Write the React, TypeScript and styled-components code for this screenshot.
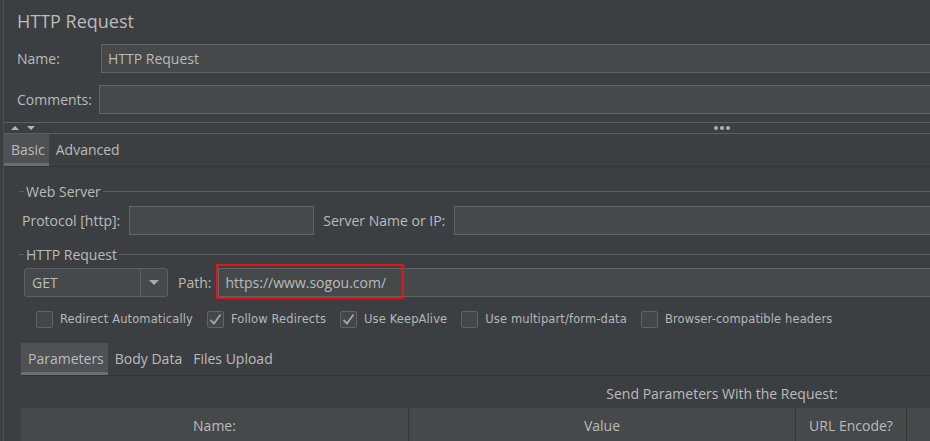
import React from 'react';
import styled, { createGlobalStyle } from 'styled-components';

const Global = createGlobalStyle`
  html, body { margin: 0; padding: 0; background: #3c3f41; overflow: hidden; }
  body { font-family: "Open Sans", "Liberation Sans", sans-serif; color: #bbbbbb; }
  * { box-sizing: border-box; }
`;

const Viewport = styled.div`
  width: 930px;
  height: 441px;
  overflow: hidden;
  background: #3c3f41;
`;

const Frame = styled.div`
  width: 1437px;
  min-height: 441px;
  margin-left: 3px;
  border-left: 1px solid #4e5153;
  display: flex;
  flex-direction: column;
`;

const Header = styled.div`
  display: flex;
  flex-direction: column;
  padding: 9px 0 0 13px;
`;

const Title = styled.div`
  font-size: 18px;
  line-height: 24px;
  height: 24px;
  color: #bbbbbb;
`;

const FieldRow = styled.div<{ $top: number }>`
  display: flex;
  align-items: center;
  height: 29px;
  margin-top: ${p => p.$top}px;
`;

const Label = styled.span<{ $w?: number; $gap?: number; $lead?: number }>`
  font-size: 14px;
  white-space: nowrap;
  color: #bbbbbb;
  ${p => (p.$w ? `width: ${p.$w}px; flex: none;` : '')}
  ${p => (p.$gap !== undefined ? `margin-right: ${p.$gap}px;` : '')}
  ${p => (p.$lead !== undefined ? `margin-left: ${p.$lead}px;` : '')}
`;

const TextInput = styled.div<{ $w?: number }>`
  height: 29px;
  background: #45494a;
  border: 1px solid #646464;
  padding: 0 6px;
  font-size: 14px;
  line-height: 27px;
  color: #bbbbbb;
  white-space: nowrap;
  ${p => (p.$w ? `width: ${p.$w}px; flex: none;` : 'flex: 1;')}
`;

const Splitter = styled.div`
  margin-top: 8px;
  height: 12px;
  border-top: 1px solid #5c5f61;
  border-bottom: 1px solid #5c5f61;
  position: relative;
  display: flex;
  align-items: center;
  padding-left: 7px;
  gap: 8px;
`;

const Arrow = styled.span<{ $up?: boolean }>`
  width: 0;
  height: 0;
  border-left: 4px solid transparent;
  border-right: 4px solid transparent;
  ${p => (p.$up ? 'border-bottom: 4px solid #b4b4b4;' : 'border-top: 4px solid #b4b4b4;')}
`;

const Dots = styled.div`
  position: absolute;
  left: 710px;
  top: 3px;
  display: flex;
  gap: 2px;
`;

const Dot = styled.span`
  width: 4px;
  height: 4px;
  border-radius: 50%;
  background: #b0b0b0;
`;

const TabBar = styled.div`
  display: flex;
  height: 33px;
  border-bottom: 1px solid #313335;
`;

const Tab = styled.div<{ $active?: boolean }>`
  display: flex;
  align-items: center;
  padding: 0 4px 1px 7px;
  font-size: 14px;
  color: #bbbbbb;
  background: ${p => (p.$active ? '#4e5254' : 'transparent')};
  box-shadow: ${p => (p.$active ? 'inset 0 -3px 0 #6c6f71' : 'none')};
`;

const Body = styled.div`
  display: flex;
  flex-direction: column;
`;

const GroupTitle = styled.div<{ $top: number }>`
  display: flex;
  align-items: center;
  height: 18px;
  margin-top: ${p => p.$top}px;
  padding-left: 15px;
  gap: 2px;
  font-size: 14px;
  color: #bbbbbb;
  &::before {
    content: '';
    width: 5px;
    height: 1px;
    background: #5c5f61;
  }
  &::after {
    content: '';
    flex: 1;
    height: 1px;
    background: #5c5f61;
  }
`;

const GroupRow = styled.div<{ $top: number; $pad: number }>`
  display: flex;
  align-items: center;
  height: 29px;
  margin-top: ${p => p.$top}px;
  padding-left: ${p => p.$pad}px;
`;

const Combo = styled.div`
  width: 144px;
  height: 29px;
  flex: none;
  display: flex;
  border: 1px solid #5e6163;
  border-radius: 3px;
  background: #45494a;
  margin-right: 10px;
`;

const ComboValue = styled.div`
  flex: 1;
  padding-left: 7px;
  font-size: 14px;
  line-height: 27px;
`;

const ComboButton = styled.div`
  width: 27px;
  border-left: 1px solid #5e6163;
  display: flex;
  align-items: center;
  justify-content: center;
  &::after {
    content: '';
    border-left: 5px solid transparent;
    border-right: 5px solid transparent;
    border-top: 5px solid #a9a9a9;
  }
`;

const PathWrap = styled.div`
  position: relative;
  flex: 1;
  display: flex;
`;

const Highlight = styled.div`
  position: absolute;
  left: -2px;
  top: -4px;
  width: 188px;
  height: 35px;
  border: 2px solid #e3141c;
  pointer-events: none;
`;

const CheckRow = styled.div`
  display: flex;
  align-items: center;
  height: 18px;
  margin-top: 13px;
  padding-left: 32px;
  gap: 14px;
`;

const CheckItem = styled.label`
  display: flex;
  align-items: center;
  gap: 7px;
  font-family: "DejaVu Sans", Verdana, sans-serif;
  font-size: 11.5px;
  letter-spacing: 0.12px;
  color: #b4b7b9;
  white-space: nowrap;
`;

const Box = styled.span`
  width: 17px;
  height: 17px;
  flex: none;
  border: 1px solid #606366;
  border-radius: 2px;
  background: #43474a;
  display: flex;
  align-items: center;
  justify-content: center;
`;

const ParamsSection = styled.div`
  margin: 15px 17px 0 17px;
  display: flex;
  flex-direction: column;
`;

const Caption = styled.div`
  height: 32px;
  padding-top: 3px;
  display: flex;
  align-items: center;
  justify-content: center;
  font-size: 14px;
  color: #bbbbbb;
`;

const TableHead = styled.div`
  display: grid;
  grid-template-columns: 388px 387px 111px 1fr;
  height: 34px;
  background: #45494a;
`;

const HeadCell = styled.div`
  display: flex;
  align-items: center;
  justify-content: center;
  font-size: 14px;
  color: #bbbbbb;
  border-right: 1px solid #333537;
  &:last-child { border-right: none; }
`;

const CheckMark = () => (
  <svg width="13" height="13" viewBox="0 0 13 13">
    <path d="M1.5 7 L5 10.5 L11.5 1.5" fill="none" stroke="#a3a5a7" strokeWidth="1.8" />
  </svg>
);

const Check = ({ checked, label }: { checked?: boolean; label: string }) => (
  <CheckItem>
    <Box>{checked && <CheckMark />}</Box>
    {label}
  </CheckItem>
);

export default function App() {
  return (
    <>
      <Global />
      <Viewport>
        <Frame>
          <Header>
            <Title>HTTP Request</Title>
            <FieldRow $top={11}>
              <Label $w={84}>Name:</Label>
              <TextInput>HTTP Request</TextInput>
            </FieldRow>
            <FieldRow $top={12}>
              <Label $w={82}>Comments:</Label>
              <TextInput />
            </FieldRow>
          </Header>
          <Splitter>
            <Arrow $up />
            <Arrow />
            <Dots>
              <Dot />
              <Dot />
              <Dot />
            </Dots>
          </Splitter>
          <TabBar>
            <Tab $active>Basic</Tab>
            <Tab>Advanced</Tab>
          </TabBar>
          <Body>
            <GroupTitle $top={15}>Web Server</GroupTitle>
            <GroupRow $top={6} $pad={18}>
              <Label $gap={9}>Protocol [http]:</Label>
              <TextInput $w={185} />
              <Label $lead={9} $gap={9}>Server Name or IP:</Label>
              <TextInput />
            </GroupRow>
            <GroupTitle $top={10}>HTTP Request</GroupTitle>
            <GroupRow $top={5} $pad={20}>
              <Combo>
                <ComboValue>GET</ComboValue>
                <ComboButton />
              </Combo>
              <Label $gap={7}>Path:</Label>
              <PathWrap>
                <TextInput>https://www.sogou.com/</TextInput>
                <Highlight />
              </PathWrap>
            </GroupRow>
            <CheckRow>
              <Check label="Redirect Automatically" />
              <Check checked label="Follow Redirects" />
              <Check checked label="Use KeepAlive" />
              <Check label="Use multipart/form-data" />
              <Check label="Browser-compatible headers" />
            </CheckRow>
            <ParamsSection>
              <TabBar>
                <Tab $active>Parameters</Tab>
                <Tab>Body Data</Tab>
                <Tab>Files Upload</Tab>
              </TabBar>
              <Caption>Send Parameters With the Request:</Caption>
              <TableHead>
                <HeadCell>Name:</HeadCell>
                <HeadCell>Value</HeadCell>
                <HeadCell>URL Encode?</HeadCell>
                <HeadCell />
              </TableHead>
            </ParamsSection>
          </Body>
        </Frame>
      </Viewport>
    </>
  );
}
